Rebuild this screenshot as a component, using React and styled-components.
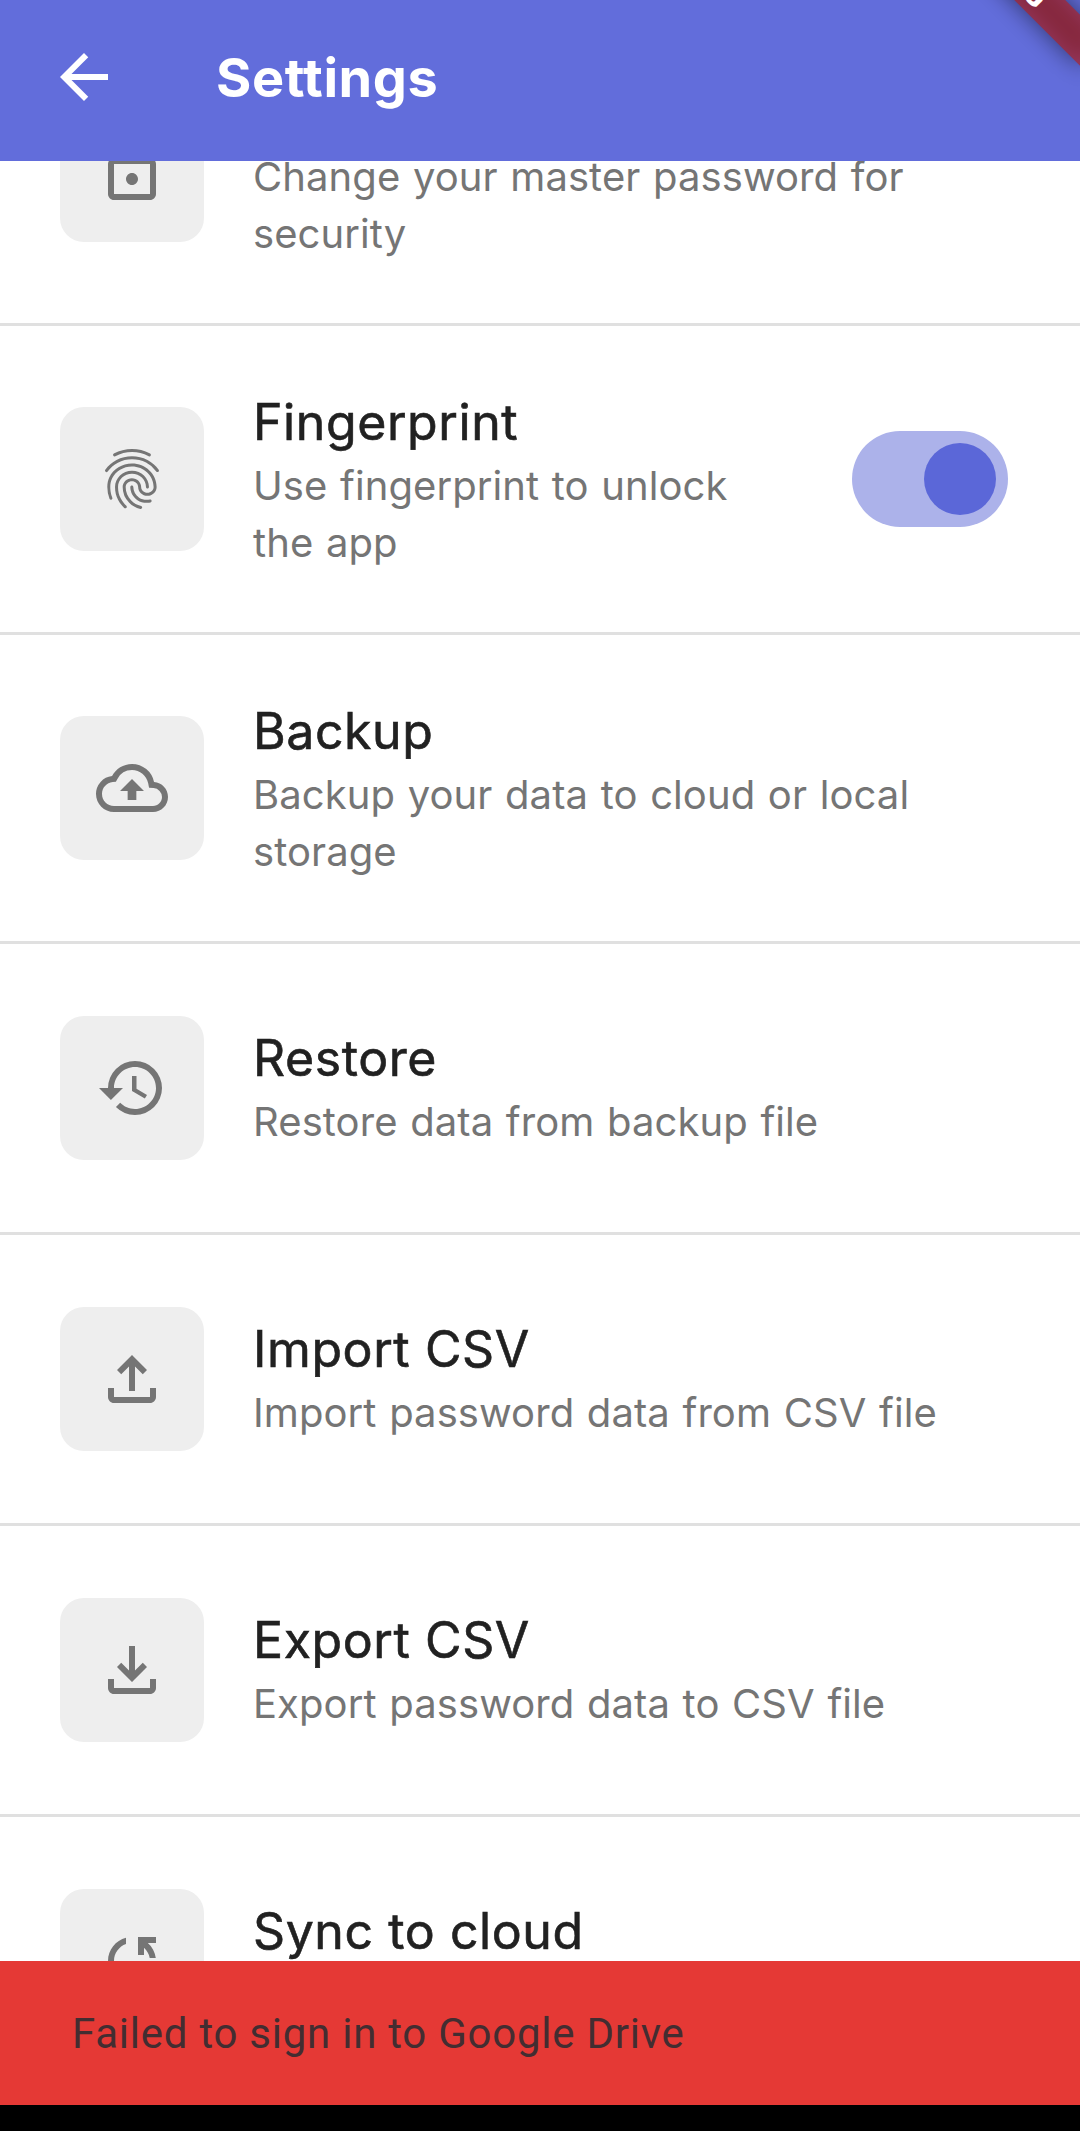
import React from "react";
import styled, { createGlobalStyle } from "styled-components";
import { MdArrowBack, MdFingerprint, MdOutlineBackup, MdRestore, MdOutlineFileUpload, MdOutlineFileDownload, MdLockOutline } from "react-icons/md";

const GlobalStyle = createGlobalStyle`
  * { box-sizing: border-box; }
  body { margin: 0; background: #000; font-family: Inter, Roboto, sans-serif; }
`;

const Screen = styled.div`
  width: 1080px;
  height: 2131px;
  display: flex;
  flex-direction: column;
  background: #000;
  overflow: hidden;
`;

const AppBar = styled.header`
  position: relative;
  flex: none;
  height: 161px;
  padding: 0 48px 7px;
  display: flex;
  align-items: center;
  background: #626ddb;
  color: #fff;
  overflow: hidden;
`;

const BackButton = styled.button`
  width: 72px;
  height: 72px;
  padding: 0;
  border: 0;
  background: none;
  color: inherit;
  display: flex;
`;

const Title = styled.h1`
  margin: 0 0 0 96px;
  font-size: 54px;
  line-height: 67px;
  font-weight: 700;
  letter-spacing: 0.55px;
`;

const Banner = styled.div`
  position: absolute;
  left: 960px;
  top: -20px;
  width: 240px;
  height: 36px;
  transform-origin: 120px -84px;
  transform: rotate(45deg);
  font: 900 30.6px/36px Roboto, sans-serif;
  text-align: center;
  &::before {
    content: "";
    position: absolute;
    inset: 0;
    background: rgba(0, 0, 0, 0.5);
    filter: blur(12px);
  }
`;

const BannerLabel = styled.span`
  position: relative;
  display: block;
  background: rgba(183, 28, 28, 0.627);
`;

const List = styled.main`
  flex: none;
  height: 1800px;
  background: #fff;
  display: flex;
  flex-direction: column;
  overflow: hidden;
`;

const Row = styled.section`
  flex: none;
  height: ${(p) => (p.$tall ? 309 : 291)}px;
  margin-top: ${(p) => (p.$scrolled ? -144 : 0)}px;
  padding: 0 72px 0 60px;
  border-bottom: 3px solid #e0e0e0;
  display: flex;
  align-items: center;
`;

const Tile = styled.div`
  flex: none;
  width: 144px;
  height: 144px;
  border-radius: 24px;
  background: #eee;
  color: #757575;
  display: flex;
  align-items: center;
  justify-content: center;
`;

const Texts = styled.div`
  flex: 1;
  margin-left: 49px;
  padding-bottom: ${(p) => (p.$tall ? 0 : 3)}px;
  white-space: nowrap;
`;

const Name = styled.div`
  font-size: 50px;
  line-height: 70px;
  font-weight: 400;
  letter-spacing: 0.58px;
  color: #212121;
  -webkit-text-stroke: 0.6px #212121;
`;

const Detail = styled.div`
  font-size: 40px;
  line-height: 57px;
  letter-spacing: 0.08px;
  word-spacing: 1.3px;
  color: #757575;
`;

const Switch = styled.div`
  flex: none;
  width: 156px;
  height: 96px;
  margin-left: 48px;
  padding: 12px;
  border-radius: 48px;
  background: #acb2ea;
  display: flex;
  justify-content: flex-end;
`;

const Thumb = styled.div`
  width: 72px;
  height: 72px;
  border-radius: 50%;
  background: #5b67d8;
`;

const SnackBar = styled.footer`
  flex: none;
  height: 144px;
  padding: 0 72px;
  display: flex;
  align-items: center;
  background: #e53935;
  color: #432d31;
  font-family: Roboto, sans-serif;
  font-size: 42px;
  letter-spacing: 0.75px;
`;

function SyncIcon({ size }) {
  return (
    <svg width={size} height={size} viewBox="0 0 24 24" fill="currentColor">
      <path d="M10 4.26v2.09C7.67 7.18 6 9.39 6 12c0 1.77.78 3.34 2 4.44V14h2v6H4v-2h2.73C5.06 16.54 4 14.4 4 12c0-3.73 2.55-6.85 6-7.74zM20 4h-6v6h2V7.56c.98.89 1.68 2.08 1.91 3.44h2.02c-.25-1.99-1.23-3.74-2.66-5H20V4z" />
    </svg>
  );
}

const rows = [
  { icon: MdLockOutline, name: "Change Password", lines: ["Change your master password for", "security"], scrolled: true },
  { icon: MdFingerprint, name: "Fingerprint", lines: ["Use fingerprint to unlock", "the app"], toggle: true },
  { icon: MdOutlineBackup, name: "Backup", lines: ["Backup your data to cloud or local", "storage"] },
  { icon: MdRestore, name: "Restore", lines: ["Restore data from backup file"] },
  { icon: MdOutlineFileUpload, name: "Import CSV", lines: ["Import password data from CSV file"] },
  { icon: MdOutlineFileDownload, name: "Export CSV", lines: ["Export password data to CSV file"] },
  { icon: SyncIcon, name: "Sync to cloud", lines: ["Sync your data to cloud"] },
];

export default function App() {
  return (
    <Screen>
      <GlobalStyle />
      <AppBar>
        <BackButton aria-label="Back"><MdArrowBack size={72} /></BackButton>
        <Title>Settings</Title>
        <Banner><BannerLabel>DEBUG</BannerLabel></Banner>
      </AppBar>
      <List>
        {rows.map(({ icon: Icon, name, lines, toggle, scrolled }) => (
          <Row key={name} $tall={lines.length > 1} $scrolled={scrolled}>
            <Tile><Icon size={72} /></Tile>
            <Texts $tall={lines.length > 1}>
              <Name>{name}</Name>
              {lines.map((line) => <Detail key={line}>{line}</Detail>)}
            </Texts>
            {toggle && <Switch><Thumb /></Switch>}
          </Row>
        ))}
      </List>
      <SnackBar>Failed to sign in to Google Drive</SnackBar>
    </Screen>
  );
}
